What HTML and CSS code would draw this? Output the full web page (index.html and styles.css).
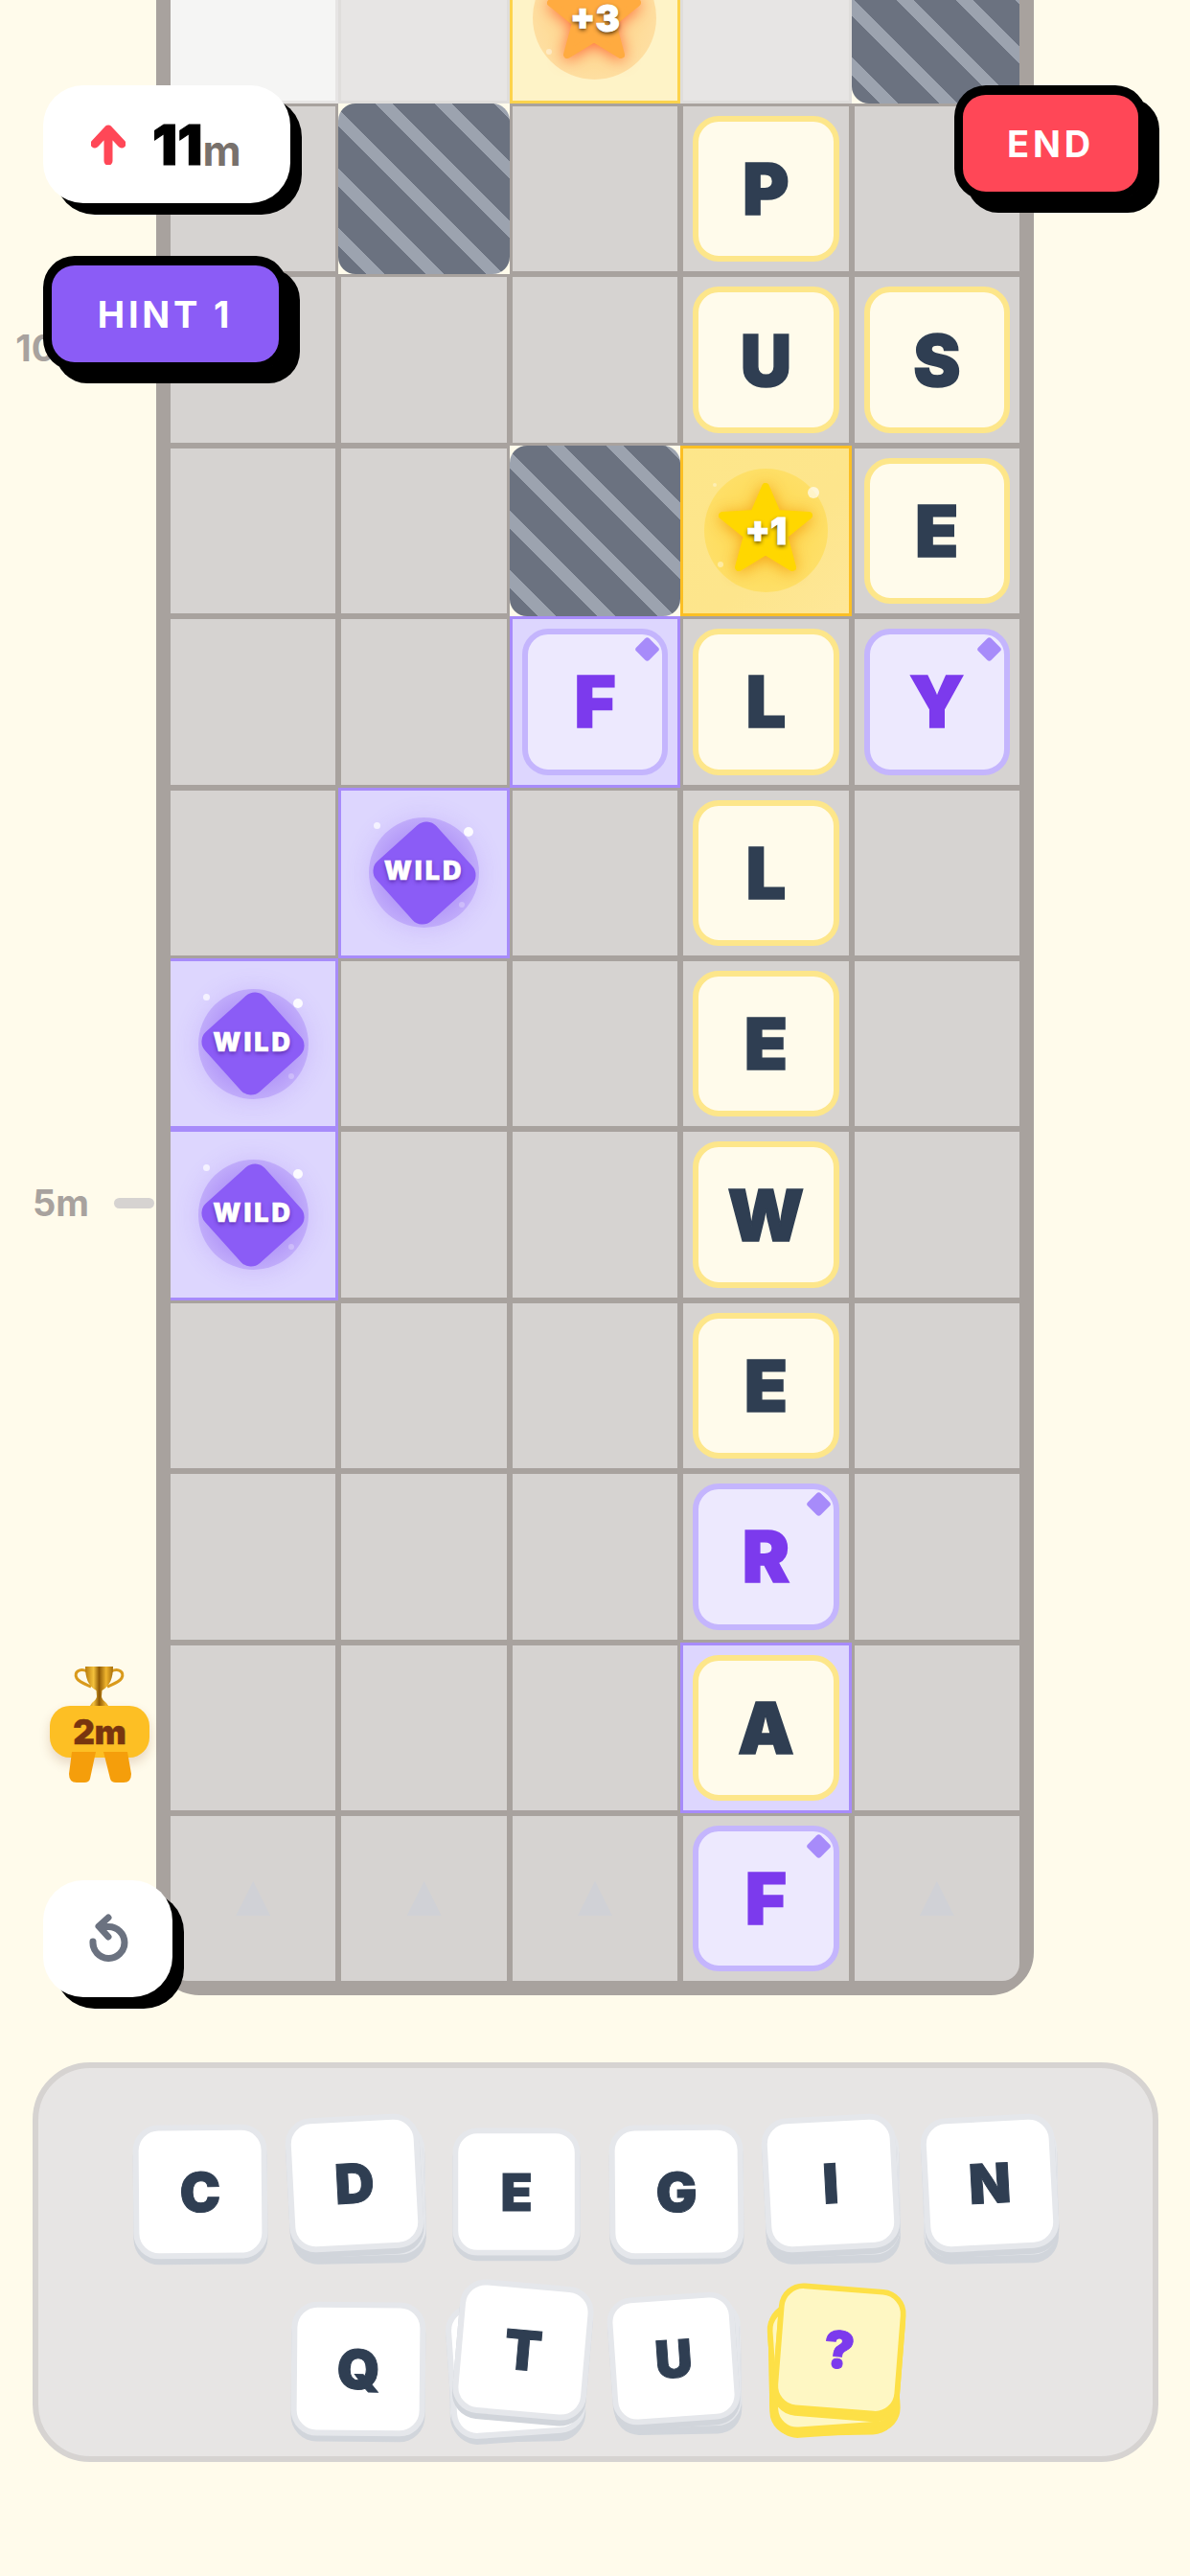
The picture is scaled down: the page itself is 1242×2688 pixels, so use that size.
FILE: index.html
```html
<!DOCTYPE html>
<html lang="en">
<head>
<meta charset="utf-8">
<title>Word tower</title>
<link rel="stylesheet" href="styles.css">
</head>
<body>
<main class="page">
  <section class="board">
    <div class="grid">
      <div class="cell fade-a"></div>
      <div class="cell fade-b"></div>
      <div class="cell bonus faded"><div class="orb orb-orange"><svg class="star star-orange" viewBox="0 0 100 95"><polygon points="50,5 62,33 95,35 69,56 78,89 50,72 22,89 31,56 5,35 38,33"/></svg><span class="star-text">+3</span><i class="spark s-b"></i></div></div>
      <div class="cell fade-b"></div>
      <div class="cell blocked"><div class="hatch"></div></div>

      <div class="cell"></div>
      <div class="cell blocked"><div class="hatch"></div></div>
      <div class="cell"></div>
      <div class="cell"><div class="tile">P</div></div>
      <div class="cell"></div>

      <div class="cell"></div>
      <div class="cell"></div>
      <div class="cell"></div>
      <div class="cell"><div class="tile">U</div></div>
      <div class="cell"><div class="tile">S</div></div>

      <div class="cell"></div>
      <div class="cell"></div>
      <div class="cell blocked"><div class="hatch"></div></div>
      <div class="cell bonus"><div class="orb"><svg class="star" viewBox="0 0 100 95"><polygon points="50,5 62,33 95,35 69,56 78,89 50,72 22,89 31,56 5,35 38,33"/></svg><span class="star-text">+1</span><i class="spark s-a"></i><i class="spark s-b"></i><i class="spark s-c"></i></div></div>
      <div class="cell"><div class="tile">E</div></div>

      <div class="cell"></div>
      <div class="cell"></div>
      <div class="cell wild"><div class="tile tile-wild">F<i class="gem"></i></div></div>
      <div class="cell"><div class="tile">L</div></div>
      <div class="cell"><div class="tile tile-wild">Y<i class="gem"></i></div></div>

      <div class="cell"></div>
      <div class="cell wild"><div class="wild-orb"><i class="diamond"></i><span class="wild-text">WILD</span><i class="spark w-a"></i><i class="spark w-b"></i><i class="spark w-c"></i></div></div>
      <div class="cell"></div>
      <div class="cell"><div class="tile">L</div></div>
      <div class="cell"></div>

      <div class="cell wild"><div class="wild-orb"><i class="diamond"></i><span class="wild-text">WILD</span><i class="spark w-a"></i><i class="spark w-b"></i><i class="spark w-c"></i></div></div>
      <div class="cell"></div>
      <div class="cell"></div>
      <div class="cell"><div class="tile">E</div></div>
      <div class="cell"></div>

      <div class="cell wild"><div class="wild-orb"><i class="diamond"></i><span class="wild-text">WILD</span><i class="spark w-a"></i><i class="spark w-b"></i><i class="spark w-c"></i></div></div>
      <div class="cell"></div>
      <div class="cell"></div>
      <div class="cell"><div class="tile">W</div></div>
      <div class="cell"></div>

      <div class="cell"></div>
      <div class="cell"></div>
      <div class="cell"></div>
      <div class="cell"><div class="tile">E</div></div>
      <div class="cell"></div>

      <div class="cell"></div>
      <div class="cell"></div>
      <div class="cell"></div>
      <div class="cell"><div class="tile tile-wild">R<i class="gem"></i></div></div>
      <div class="cell"></div>

      <div class="cell"></div>
      <div class="cell"></div>
      <div class="cell"></div>
      <div class="cell wild"><div class="tile">A</div></div>
      <div class="cell"></div>

      <div class="cell"><i class="tri"></i></div>
      <div class="cell"><i class="tri"></i></div>
      <div class="cell"><i class="tri"></i></div>
      <div class="cell"><div class="tile tile-wild">F<i class="gem"></i></div></div>
      <div class="cell"><i class="tri"></i></div>
    </div>
  </section>

  <section class="rack">
    <div class="rack-row">
      <div class="slot"><div class="card c-c">C</div></div>
      <div class="slot"><i class="card under d-u2"></i><i class="card under d-u1"></i><div class="card c-d">D</div></div>
      <div class="slot"><div class="card c-e">E</div></div>
      <div class="slot"><div class="card c-g">G</div></div>
      <div class="slot"><i class="card under d-u2"></i><i class="card under d-u1"></i><div class="card c-i">I</div></div>
      <div class="slot"><i class="card under d-u2"></i><i class="card under d-u1"></i><div class="card c-n">N</div></div>
    </div>
    <div class="rack-row">
      <div class="slot"><div class="card c-q">Q</div></div>
      <div class="slot"><i class="card under t-u2"></i><i class="card under t-u1"></i><div class="card c-t">T</div></div>
      <div class="slot"><i class="card under u-u2"></i><i class="card under u-u1"></i><div class="card c-u">U</div></div>
      <div class="slot"><i class="card joker under j-u2"></i><i class="card joker under j-u1"></i><div class="card joker c-j">?</div></div>
    </div>
  </section>

  <div class="mark mark-10"><span>10m</span><i class="tick"></i></div>
  <div class="mark mark-5"><span>5m</span><i class="tick"></i></div>

  <div class="goal">
    <svg class="cup" viewBox="0 0 53 41">
      <defs><linearGradient id="gold" x1="0" x2="1" y1="0" y2="0"><stop offset="0" stop-color="#b67a0c"/><stop offset=".3" stop-color="#f5c23c"/><stop offset=".5" stop-color="#8f5a06"/><stop offset=".75" stop-color="#f0b52e"/><stop offset="1" stop-color="#a66c08"/></linearGradient></defs>
      <path class="cup-handle" d="M14 5C6 1 0 6 3 12C5 16 11 18 18 21M39 5C47 1 53 6 50 12C48 16 42 18 35 21"/>
      <path fill="url(#gold)" d="M12 0H41C41 12 38 20 29.500 25L29 31C29 34 32 36 34 38L36 41H17L19 38C21 36 24 34 24 31L23.500 25C15 20 12 12 12 0Z"/>
    </svg>
    <div class="goal-badge">2m</div>
    <svg class="ribbons" viewBox="0 0 66 32"><path d="M3 0H28L22 28Q21 32 16 32H8Q0 32 0 23ZM36 0H61L65 23Q65 32 57 32H49Q44 32 43 28Z"/></svg>
  </div>

  <div class="pill">
    <svg class="up" viewBox="0 0 36 42"><path d="M18 38V5M4 20L18 5L32 20"/></svg>
    <span class="pill-num">11</span><span class="pill-unit">m</span>
  </div>
  <button class="btn btn-hint">HINT 1</button>
  <button class="btn btn-end">END</button>
  <button class="undo">
    <svg viewBox="0 0 40 48"><path d="M4 27A16.500 16.500 0 1 0 20 11.500H11M20 2L10 11L20 22"/></svg>
  </button>
</main>
</body>
</html>
```

FILE: styles.css
```css
* { box-sizing: border-box; }
html, body { margin: 0; padding: 0; }
body { background: #fffbeb; font-family: "Inter", "Liberation Sans", sans-serif; }

.page {
  position: relative;
  width: 1242px;
  height: 2688px;
  overflow: hidden;
  background: #fffbeb;
}

/* Board */
.board {
  width: 916px;
  margin: -82.400px 0 0 163px;
  border: 15px solid #a8a29e;
  border-radius: 0 0 45px 45px;
  background: #a8a29e;
}
.grid {
  display: grid;
  grid-template-columns: repeat(5, 1fr);
  grid-auto-rows: 172.400px;
  gap: 6px;
  border-radius: 0 0 18px 18px;
  overflow: hidden;
}
.cell {
  background: #d6d3d1;
  padding: 10px;
  display: flex;
  align-items: center;
  justify-content: center;
  min-width: 0;
}
.fade-a, .fade-b, .bonus, .wild, .blocked {
  margin: -3px;
  border: 3px solid transparent;
}
.fade-a { background: #f5f5f4; border-color: #e7e5e4; }
.fade-b { background: #e7e5e4; border-color: #dfdddb; }
.bonus { background: linear-gradient(135deg, #fde68a, #fde58c 60%, #fee798); border-color: #fbbf24; }
.bonus.faded { background: #fef3c7; border-color: #fcd34d; }
.wild { background: #ddd6fe; border-color: #a78bfa; }
.blocked { background: #fffbeb; border: 0; padding: 0; }
.hatch {
  width: 100%;
  height: 100%;
  border-radius: 18px;
  background: repeating-linear-gradient(45deg, #6b7280 0 21px, #9ca3af 21px 34px, #6b7280 34px 44px);
}

/* Tiles */
.tile {
  position: relative;
  width: 100%;
  height: 100%;
  display: flex;
  align-items: center;
  justify-content: center;
  background: #fffbeb;
  border: 6px solid #fde68a;
  border-radius: 27px;
  color: #2f3e52;
  font-size: 74px;
  font-weight: 900;
  line-height: 1;
  -webkit-text-stroke: 1.500px currentColor;
}
.tile-wild { background: #ede9fe; border-color: #c4b5fd; color: #7c3aed; }
.gem {
  position: absolute;
  top: 6px;
  right: 6px;
  width: 19px;
  height: 19px;
  border-radius: 3px;
  background: #a78bfa;
  transform: rotate(45deg);
}

/* Star bonus */
.orb {
  position: relative;
  flex: none;
  width: 129px;
  height: 129px;
  border-radius: 50%;
  background: radial-gradient(circle, #fedc5c 40%, #fee272 100%);
  display: flex;
  align-items: center;
  justify-content: center;
}
.orb-orange { background: radial-gradient(circle, #fedb98 50%, #fee3ac 100%); }
.star {
  position: absolute;
  left: 14px;
  top: 14px;
  width: 100px;
  height: 95px;
  overflow: visible;
  filter: drop-shadow(0 2px 8px rgba(245, 158, 11, .9));
}
.star polygon { fill: #ffd700; stroke: #ffd700; stroke-width: 8; stroke-linejoin: round; }
.star-orange { filter: drop-shadow(0 2px 8px rgba(255, 90, 40, .85)); }
.star-orange polygon { fill: #ffab40; stroke: #ffab40; }
.star-text {
  position: relative;
  color: #fff;
  font-size: 38px;
  font-weight: 900;
  line-height: 1;
  -webkit-text-stroke: 1px #fff;
  text-shadow: 0 2px 4px rgba(40, 25, 0, .85);
}
.spark { position: absolute; border-radius: 50%; background: #fff; }
.s-a { left: 108px; top: 19px; width: 12px; height: 12px; opacity: .65; }
.s-b { left: 14px; top: 97px; width: 6px; height: 6px; opacity: .4; }
.s-c { left: 9px; top: 15px; width: 4px; height: 4px; opacity: .35; }

/* Wild bonus */
.wild-orb {
  position: relative;
  flex: none;
  width: 115px;
  height: 115px;
  border-radius: 50%;
  background: radial-gradient(circle, rgba(124, 72, 240, .55) 30%, rgba(139, 92, 246, .14) 100%);
  box-shadow: 0 2px 26px rgba(139, 92, 246, .2);
  display: flex;
  align-items: center;
  justify-content: center;
}
.diamond {
  position: absolute;
  left: 15.500px;
  top: 15.500px;
  width: 84px;
  height: 84px;
  border-radius: 14px;
  background: #8b5cf6;
  transform: rotate(48deg);
}
.wild-text {
  position: relative;
  top: -2px;
  color: #fff;
  font-size: 27px;
  font-weight: 900;
  letter-spacing: 3px;
  line-height: 1;
  -webkit-text-stroke: .5px #fff;
  text-shadow: 0 2px 4px rgba(76, 29, 149, .8);
}
.w-a { left: 5px; top: 5px; width: 7px; height: 7px; opacity: .7; }
.w-b { left: 99px; top: 10px; width: 10px; height: 10px; opacity: .9; }
.w-c { left: 94px; top: 88px; width: 6px; height: 6px; opacity: .25; }

.tri {
  width: 36px;
  height: 36px;
  background: #d0d1d6;
  clip-path: polygon(50% 0, 100% 100%, 0 100%);
}

/* Rack */
.rack {
  width: 1175px;
  height: 417px;
  margin: 70px 0 0 34px;
  padding-top: 59px;
  background: #e7e5e4;
  border: 6px solid #d6d3d1;
  border-radius: 60px;
  display: flex;
  flex-direction: column;
  gap: 45px;
}
.rack-row { display: flex; justify-content: center; gap: 25px; }
.slot { position: relative; flex: none; width: 140px; height: 140px; }
.card {
  width: 140px;
  height: 140px;
  display: flex;
  align-items: center;
  justify-content: center;
  background: #fff;
  border: 6px solid #e5e7eb;
  border-radius: 27px;
  box-shadow: 0 6px 0 #d1d5db;
  color: #2f3e52;
  font-size: 57px;
  font-weight: 900;
  line-height: 1;
  -webkit-text-stroke: 1px currentColor;
  position: relative;
}
.under { position: absolute; left: 0; top: 0; }
.c-c { transform: rotate(-.5deg); }
.c-d { transform: translate(-4px, -9px) rotate(-3deg); }
.c-e { transform: scale(.95); }
.c-g { transform: translate(2px, 0) rotate(-.5deg); }
.c-i { transform: translate(-2px, -9px) rotate(-3deg); }
.c-n { transform: translate(-1px, -9px) rotate(-3deg); }
.c-q { transform: rotate(.5deg); }
.c-t { transform: translate(7px, -20px) rotate(5deg); }
.c-u { transform: translate(-1px, -11px) rotate(-4deg) scale(.95); }
.c-j { transform: translate(7px, -20px) rotate(4.500deg) scale(.95); }
.d-u1 { transform: translate(-1px, -3px) rotate(-2deg); }
.d-u2 { transform: translate(0, -1px) rotate(-1deg); }
.t-u1 { transform: translate(-1px, 0) rotate(-4deg); }
.t-u2 { transform: translate(0, 0) rotate(-1deg); }
.u-u1 { transform: translate(2px, -6px) rotate(-2deg) scale(.95); }
.u-u2 { transform: translate(3px, -4px) rotate(-1deg) scale(.95); }
.joker {
  background: #fef7c3;
  border-color: #fde047;
  box-shadow: 0 6px 0 #fde047;
  color: #7c3aed;
  font-size: 56px;
}
.j-u1 { transform: translate(1px, -3px) rotate(-4deg) scale(.95); }
.j-u2 { transform: translate(0, -3px) rotate(-1deg) scale(.95); }

/* Height marks */
.mark {
  position: absolute;
  left: 0;
  width: 161px;
  display: flex;
  align-items: center;
  justify-content: flex-end;
  gap: 26px;
  color: #a8a29e;
  font-size: 38px;
  font-weight: 700;
  line-height: 44px;
}
.mark-10 { top: 341px; }
.mark-5 { top: 1233px; }
.tick { width: 42px; height: 11px; border-radius: 6px; background: #d6d3d1; }

/* Goal trophy */
.goal { position: absolute; left: 52px; top: 1739px; width: 104px; height: 121px; }
.cup { position: absolute; left: 25px; top: 0; width: 53px; height: 41px; overflow: visible; }
.cup-handle { fill: none; stroke: #d99a1c; stroke-width: 3; }
.goal-badge {
  position: absolute;
  left: 0;
  top: 41px;
  width: 104px;
  height: 54px;
  border-radius: 21px;
  background: #fdbf24;
  box-shadow: 0 6px 12px rgba(120, 53, 15, .18);
  color: #78350f;
  font-size: 35px;
  font-weight: 900;
  line-height: 54px;
  text-align: center;
  -webkit-text-stroke: .5px currentColor;
}
.ribbons { position: absolute; left: 20px; top: 89px; width: 66px; height: 32px; fill: #f59e0b; }

/* HUD */
.pill {
  position: absolute;
  left: 45px;
  top: 89px;
  width: 258px;
  height: 123px;
  display: flex;
  align-items: center;
  padding-left: 50px;
  background: #fff;
  border-radius: 42px;
  box-shadow: 12px 12px 0 #000;
}
.up { width: 36px; height: 42px; margin-right: 28px; fill: none; stroke: #ff4757; stroke-width: 9; stroke-linecap: round; stroke-linejoin: round; }
.pill-num { color: #000; font-size: 58px; font-weight: 900; line-height: 1; -webkit-text-stroke: 1px #000; }
.pill-unit { color: #78716c; font-size: 44px; font-weight: 700; line-height: 1; margin-top: 12px; }
.btn {
  position: absolute;
  display: block;
  padding: 0;
  color: #fff;
  font-family: "Inter", "Liberation Sans", sans-serif;
  font-size: 38px;
  font-weight: 700;
  line-height: 1;
  letter-spacing: 3.800px;
  border-style: solid;
  border-color: #000;
  border-width: 10px 9px 9px;
  border-radius: 33px;
  box-shadow: 13px 13px 0 #000;
}
.btn-hint { left: 45px; top: 267px; width: 255px; height: 120px; background: #8b5cf6; }
.btn-end { left: 996px; top: 89px; width: 201px; height: 120px; background: #ff4757; }
.undo {
  position: absolute;
  left: 45px;
  top: 1962px;
  width: 135px;
  height: 122px;
  padding: 0;
  border: 0;
  display: flex;
  align-items: center;
  justify-content: center;
  background: #fff;
  border-radius: 42px;
  box-shadow: 12px 12px 0 #000;
}
.undo svg { width: 40px; height: 48px; fill: none; stroke: #6b7280; stroke-width: 7; stroke-linecap: round; stroke-linejoin: round; overflow: visible; }
```
